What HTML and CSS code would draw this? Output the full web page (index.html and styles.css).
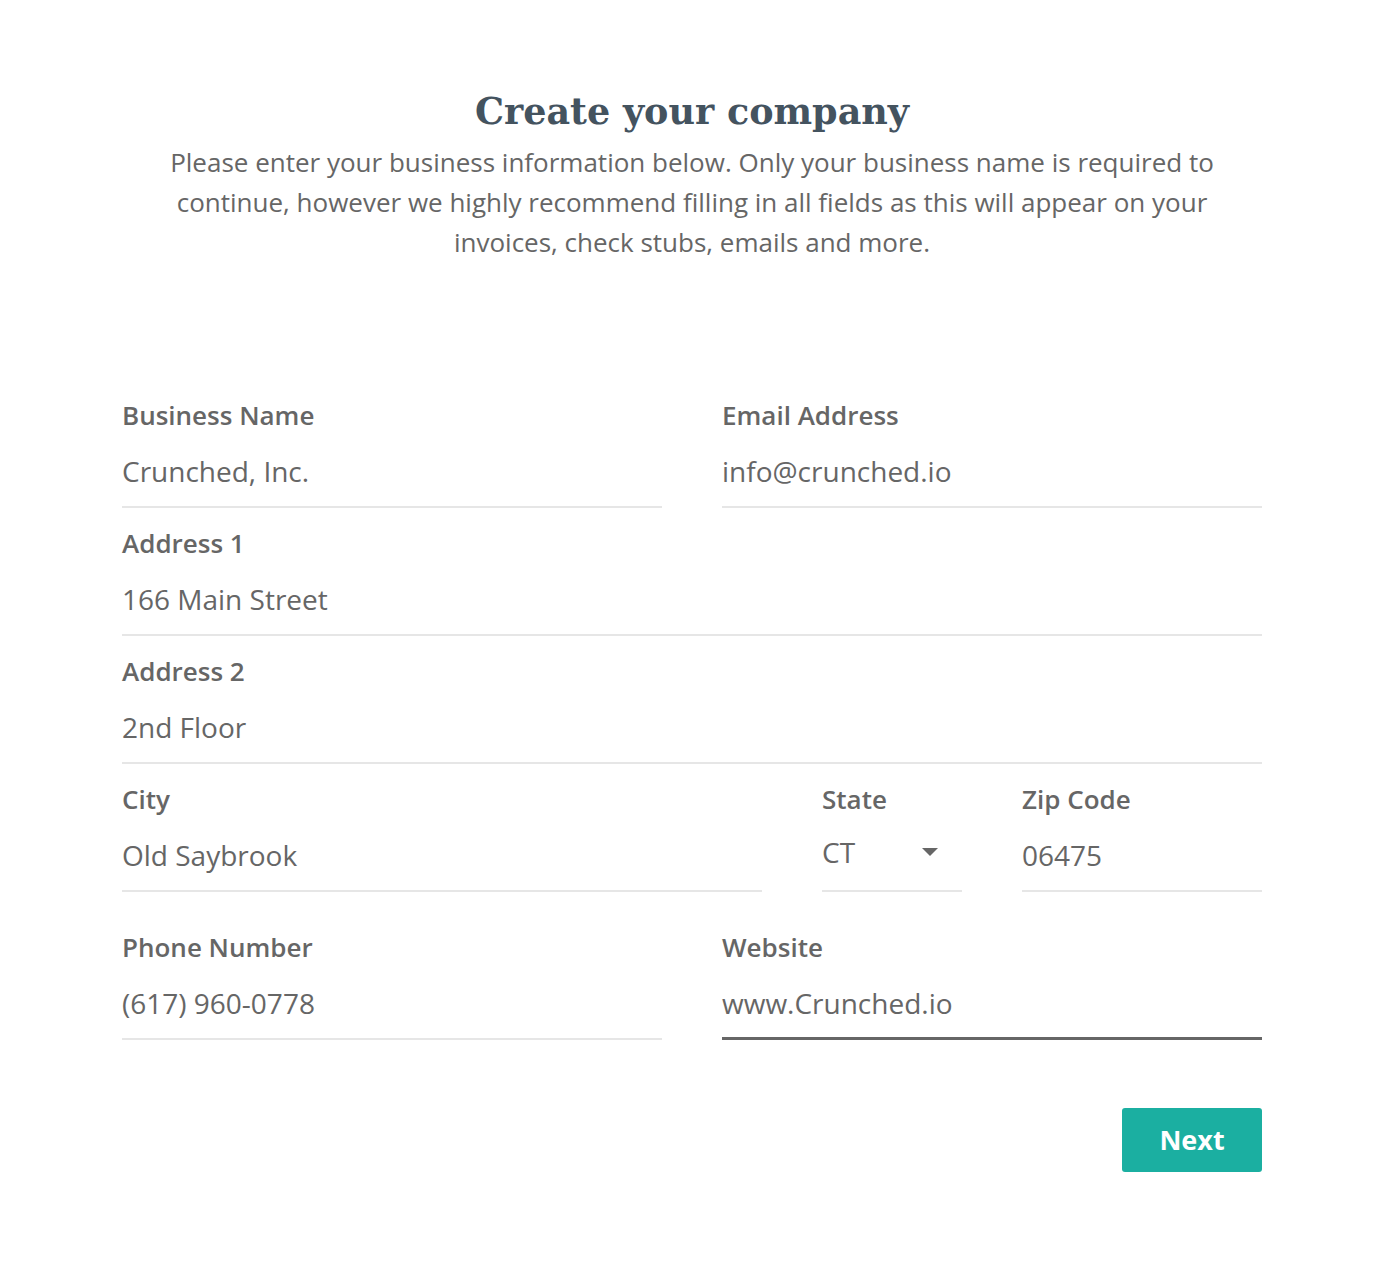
FILE: index.html
```html
<!DOCTYPE html>
<html lang="en">
<head>
<meta charset="utf-8">
<title>Create your company</title>
<link rel="stylesheet" href="styles.css">
</head>
<body>
<main class="page">
  <header class="intro">
    <h1 class="title">Create your company</h1>
    <p class="lead">Please enter your business information below. Only your business name is required to continue, however we highly recommend filling in all fields as this will appear on your invoices, check stubs, emails and more.</p>
  </header>
  <form class="form">
    <div class="row two">
      <label class="field"><span class="label">Business Name</span><span class="value">Crunched, Inc.</span></label>
      <label class="field"><span class="label">Email Address</span><span class="value">info@crunched.io</span></label>
    </div>
    <div class="row one">
      <label class="field"><span class="label">Address 1</span><span class="value">166 Main Street</span></label>
    </div>
    <div class="row one">
      <label class="field"><span class="label">Address 2</span><span class="value">2nd Floor</span></label>
    </div>
    <div class="row three">
      <label class="field"><span class="label">City</span><span class="value">Old Saybrook</span></label>
      <label class="field"><span class="label">State</span><span class="value select">CT<span class="caret"></span></span></label>
      <label class="field"><span class="label">Zip Code</span><span class="value">06475</span></label>
    </div>
    <div class="row two last">
      <label class="field"><span class="label">Phone Number</span><span class="value">(617) 960-0778</span></label>
      <label class="field focus"><span class="label">Website</span><span class="value">www.Crunched.io</span></label>
    </div>
    <div class="actions">
      <button type="button" class="next">Next</button>
    </div>
  </form>
</main>
</body>
</html>
```
FILE: styles.css
```css
html, body {
  margin: 0;
  padding: 0;
  background: #fff;
}
body {
  font-family: "Open Sans", "Noto Sans", sans-serif;
  color: #666;
}
.page {
  width: 1140px;
  margin: 0 124px 0 122px;
  padding-top: 84px;
}
.intro {
  text-align: center;
}
.title {
  margin: 0;
  font-family: "DejaVu Serif", "Liberation Serif", serif;
  font-weight: bold;
  font-size: 36.5px;
  line-height: 56px;
  color: #44535f;
}
.lead {
  margin: 2px auto 0;
  width: 1080px;
  font-size: 26px;
  line-height: 40px;
  color: #666;
}
.form {
  margin-top: 136px;
}
.row {
  display: grid;
  column-gap: 60px;
}
.row.two { grid-template-columns: 1fr 1fr; }
.row.one { grid-template-columns: 1fr; }
.row.three { grid-template-columns: 640px 140px 1fr; }
.row.last { margin-top: 20px; }
.field {
  display: flex;
  flex-direction: column;
  border-bottom: 2px solid #e6e6e6;
  margin-bottom: 18px;
}
.label {
  font-size: 26px;
  font-weight: 600;
  line-height: 34px;
  color: #666;
}
.value {
  font-size: 28px;
  line-height: 40px;
  padding: 19px 0 15px;
  color: #666;
}
.field.focus {
  border-bottom: 3px solid #666;
}
.field.focus .value {
  padding-bottom: 14px;
}
.select {
  display: flex;
  align-items: center;
  justify-content: space-between;
  padding-right: 24px;
  padding-top: 16px;
  padding-bottom: 18px;
}
.caret {
  width: 0;
  height: 0;
  border-left: 8px solid transparent;
  border-right: 8px solid transparent;
  border-top: 8px solid #666;
}
.actions {
  display: flex;
  justify-content: flex-end;
  margin-top: 50px;
}
.next {
  width: 140px;
  height: 64px;
  border: none;
  border-radius: 3px;
  background: #1bafa1;
  color: #fff;
  font-family: "Open Sans", "Noto Sans", sans-serif;
  font-weight: 700;
  font-size: 27px;
  line-height: 1;
  padding: 0 0 2px;
  cursor: pointer;
}
```
